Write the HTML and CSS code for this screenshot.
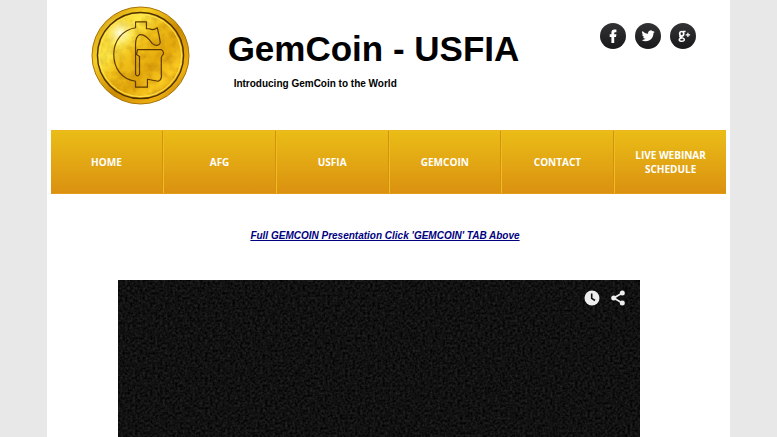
FILE: index.html
```html
<!DOCTYPE html>
<html lang="en">
<head>
  <meta charset="UTF-8" />
  <meta name="viewport" content="width=device-width, initial-scale=1.0"/>
  <title>GemCoin - USFIA</title>
  <link rel="stylesheet" href="styles.css">
</head>
<body>
  <div class="page">
    <header class="header">
      <svg class="coin" viewBox="0 0 100 100" aria-hidden="true">
        <defs>
          <linearGradient id="rim" x1="0" y1="0" x2="1" y2="1">
            <stop offset="0" stop-color="#c58a08"/>
            <stop offset="0.3" stop-color="#f7cf22"/>
            <stop offset="0.55" stop-color="#c98a00"/>
            <stop offset="0.8" stop-color="#eeb010"/>
            <stop offset="1" stop-color="#945a00"/>
          </linearGradient>
          <linearGradient id="face" x1="0.1" y1="0.1" x2="0.9" y2="0.9">
            <stop offset="0" stop-color="#f3c81c"/>
            <stop offset="0.24" stop-color="#ffec4a"/>
            <stop offset="0.42" stop-color="#f2c21a"/>
            <stop offset="0.65" stop-color="#e4a90c"/>
            <stop offset="0.85" stop-color="#fbcb22"/>
            <stop offset="1" stop-color="#da9806"/>
          </linearGradient>
          <radialGradient id="shine">
            <stop offset="0" stop-color="#fffde0"/>
            <stop offset="1" stop-color="#fff36a" stop-opacity="0"/>
          </radialGradient>
          <filter id="grain" x="0" y="0" width="100%" height="100%" color-interpolation-filters="sRGB">
            <feTurbulence type="fractalNoise" baseFrequency="0.12" numOctaves="3" seed="8"/>
            <feColorMatrix values="0 0 0 0 0.62  0 0 0 0 0.36  0 0 0 0 0  0.6 0 0 0 -0.22"/>
            <feComposite operator="in" in2="SourceGraphic"/>
          </filter>
        </defs>
        <circle cx="50" cy="50" r="49" fill="url(#rim)" stroke="#a87208" stroke-width="1"/>
        <circle cx="50" cy="50" r="43" fill="url(#face)"/>
        <circle cx="50" cy="50" r="43" filter="url(#grain)"/>
        <circle cx="29" cy="27" r="17" fill="url(#shine)"/>
        <circle cx="50" cy="50" r="43.5" fill="none" stroke="#4d3000" stroke-width="1.4"/>
        <circle cx="50" cy="50" r="41.5" fill="none" stroke="#ffe650" stroke-width="1"/>
        <path fill="none" stroke="#5f3a00" stroke-width="1.2" stroke-linejoin="round" d="M45 16H56V23H59Q63 25 67 22Q69 30 70 37Q68 42 62 38Q55 28 49 29Q45 31 45 39V69Q47 72 49 69V51L46 49L47 44H71Q75 47 72 50L71 52V68Q72 74 68 76Q62 75 57 74V82H45V76C31 74 23 63 23 49C23 35 32 24 45 22Z"/>
      </svg>
      <div class="branding">
        <h1>GemCoin - USFIA</h1>
        <p>Introducing GemCoin to the World</p>
      </div>
      <div class="social-links">
        <a href="#" aria-label="Facebook">
          <svg viewBox="0 0 26 26"><path fill="#fff" d="M11.4 20V14H9.7V11.2H11.4V9.5Q11.4 6.5 14.4 6.5H16.4V9.2H15Q14.2 9.2 14.2 10V11.2H16.4L16 14H14.2V20Z"/></svg>
        </a>
        <a href="#" aria-label="Twitter">
          <svg viewBox="0 0 26 26"><path fill="#fff" transform="translate(6.6 6.2) scale(.55)" d="M23.95 4.57a10 10 0 0 1-2.82.77 4.96 4.96 0 0 0 2.16-2.72c-.95.55-2 .95-3.13 1.18a4.92 4.92 0 0 0-8.38 4.48C7.69 8.1 4.07 6.13 1.64 3.16a4.92 4.92 0 0 0 1.52 6.57 4.9 4.9 0 0 1-2.23-.61v.06a4.92 4.92 0 0 0 3.95 4.83 5 5 0 0 1-2.21.08 4.94 4.94 0 0 0 4.6 3.42A9.87 9.87 0 0 1 0 19.54a14 14 0 0 0 7.55 2.21c9.05 0 14-7.5 14-13.98 0-.21 0-.42-.02-.63a9.94 9.94 0 0 0 2.42-2.57Z"/></svg>
        </a>
        <a href="#" aria-label="Google Plus">
          <svg viewBox="0 0 26 26" fill="none" stroke="#fff"><ellipse cx="11.7" cy="10.8" rx="2" ry="2.3" stroke-width="1.7"/><path stroke-width="1.5" d="M13 8.6H15.6M10.5 12.8Q9 14 11 14.6L13 15.1Q15 16 14 17.5Q12.5 18.8 10.2 18Q8.4 17 10 15.6L11.4 15"/><path stroke-width="1.2" d="M17.9 9.7V14.1M15.7 11.9H20.1"/></svg>
        </a>
      </div>
    </header>

    <nav class="menu">
      <a href="#">HOME</a>
      <a href="#">AFG</a>
      <a href="#">USFIA</a>
      <a href="#">GEMCOIN</a>
      <a href="#">CONTACT</a>
      <a href="#">LIVE WEBINAR SCHEDULE</a>
    </nav>

    <main class="content">
      <a class="presentation" href="#">Full GEMCOIN Presentation Click 'GEMCOIN' TAB Above</a>
      <div class="video">
        <svg class="static" aria-hidden="true">
          <filter id="noise" x="0" y="0" width="100%" height="100%" color-interpolation-filters="sRGB">
            <feTurbulence type="fractalNoise" baseFrequency="0.4" numOctaves="2" seed="4"/>
            <feColorMatrix values="0.2 0 0 0 -0.032  0.2 0 0 0 -0.032  0.2 0 0 0 -0.032  0 0 0 0 1"/>
          </filter>
          <rect width="100%" height="100%" filter="url(#noise)"/>
        </svg>
        <div class="video-buttons">
          <button type="button" aria-label="Watch later">
            <svg viewBox="0 0 16 16"><circle cx="8" cy="8" r="7.5" fill="#eee"/><path d="M7.7 3.5V8.3L11 10.5" fill="none" stroke="#111" stroke-width="1.6"/></svg>
          </button>
          <button type="button" aria-label="Share">
            <svg viewBox="0 0 16 16" fill="#eee"><path d="M12.2 3L3.8 8L12.2 13" fill="none" stroke="#eee" stroke-width="1.7"/><circle cx="12.3" cy="3" r="2.5"/><circle cx="3.7" cy="8" r="2.5"/><circle cx="12.3" cy="13" r="2.5"/></svg>
          </button>
        </div>
      </div>
    </main>
  </div>
</body>
</html>
```

FILE: styles.css
```css
* {
  box-sizing: border-box;
}

body {
  margin: 0;
  background: #e8e8e8;
  color: #000;
  font-family: Arial, "Liberation Sans", sans-serif;
}

.page {
  display: flex;
  flex-direction: column;
  width: 88%;
  min-height: 100vh;
  margin: 0 auto;
  padding: 0 4px;
  background: #fff;
}

.header {
  display: flex;
  align-items: flex-start;
  padding: 6px 30px 25px 40px;
}

.coin {
  width: 99px;
  height: 99px;
  flex: none;
}

.branding {
  flex: 1;
  padding: 22px 0 0 38px;
}

.branding h1 {
  margin: 0;
  font-size: 35px;
  line-height: 42px;
  white-space: nowrap;
}

.branding p {
  margin: 6px 0 0 6px;
  font-size: 10px;
  line-height: 15px;
  font-weight: bold;
}

.social-links {
  display: flex;
  gap: 9px;
  padding-top: 17px;
}

.social-links a {
  width: 26px;
  height: 26px;
  border-radius: 50%;
  background: linear-gradient(#333336, #18181b);
}

.social-links svg,
.video-buttons svg {
  display: block;
  width: 100%;
  height: 100%;
}

.menu {
  display: grid;
  grid-template-columns: repeat(6, 1fr);
  height: 64px;
  background: linear-gradient(#eabd17, #db9110);
  border-top: 1px solid #edb41b;
  border-bottom: 1px solid #e39a19;
}

.menu a {
  display: flex;
  align-items: center;
  justify-content: center;
  padding: 0 16px;
  border-left: 1px solid #f0bd20;
  border-right: 1px solid #d4920f;
  color: #fff;
  font-family: "Open Sans", sans-serif;
  font-size: 10px;
  line-height: 14px;
  font-weight: bold;
  text-align: center;
  text-decoration: none;
}

.menu a:first-child {
  border-left: none;
}

.menu a:last-child {
  border-right: none;
}

.content {
  flex: 1;
  display: flex;
  flex-direction: column;
  padding: 34px 86px 0 67px;
}

.presentation {
  padding-left: 12px;
  color: #000080;
  font-size: 10px;
  line-height: 15px;
  font-weight: bold;
  font-style: italic;
  text-align: center;
}

.video {
  position: relative;
  flex: 1;
  min-height: 150px;
  margin-top: 37px;
  background: #111;
}

.static {
  position: absolute;
  width: 100%;
  height: 100%;
}

.video-buttons {
  position: absolute;
  top: 10px;
  right: 14px;
  display: flex;
  gap: 10px;
}

.video-buttons button {
  width: 16px;
  height: 16px;
  padding: 0;
  border: none;
  background: none;
  cursor: pointer;
}
```
